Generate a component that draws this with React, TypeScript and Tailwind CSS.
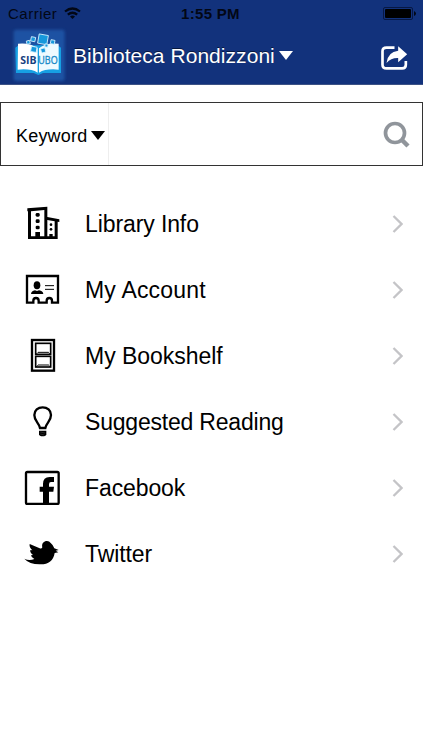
import type { ReactNode } from 'react'

const ICON_BOX = '27 33 108 108'

function BuildingIcon() {
  return (
    <svg viewBox="27 30 108 108" className="h-9 w-9">
      <path d="M37 40L97 35V66L133 73V81L128 80V132H39V49L37 49ZM48 49V124H61V111H75V124H88V45ZM97 75V124H103V117H113V124H119V79Z" fillRule="evenodd" />
      <rect x="62" y="54" width="12" height="11" rx="4" />
      <rect x="62" y="73" width="12" height="11" rx="4" />
      <rect x="62" y="92" width="12" height="11" rx="4" />
      <circle cx="108" cy="89" r="4" />
      <circle cx="108" cy="103" r="4" />
    </svg>
  )
}

function AccountIcon() {
  return (
    <svg viewBox={ICON_BOX} className="h-9 w-9">
      <path d="M36 48H129V128H111V122Q111 114 103 114T95 122V128H71V122Q71 114 63 114T55 122V128H36Z" fill="none" stroke="black" strokeWidth="7" />
      <ellipse cx="66" cy="76" rx="10" ry="12" />
      <path d="M48 102Q49 93 60 91L66 93L72 91Q84 93 85 102Z" />
      <path d="M90 77H117M90 88H117" stroke="black" strokeWidth="3" />
    </svg>
  )
}

function BookshelfIcon() {
  return (
    <svg viewBox={ICON_BOX} className="h-9 w-9" fill="none" stroke="black">
      <rect x="51" y="42" width="66" height="92" strokeWidth="7" />
      <rect x="62" y="52" width="45" height="33" strokeWidth="5" />
      <rect x="62" y="91" width="45" height="32" strokeWidth="5" />
      <path d="M69 79H101M69 117H101" strokeWidth="3" />
      <path d="M64 84L69 79M105 84L100 79M64 122L69 117M105 122L100 117" strokeWidth="2" />
    </svg>
  )
}

function BulbIcon() {
  return (
    <svg viewBox={ICON_BOX} className="h-9 w-9">
      <path d="M75 108C72 92 58 87 58 69C58 55 69 46 83 46S108 55 108 69C108 87 94 92 91 108Z" fill="none" stroke="black" strokeWidth="7" />
      <path d="M72 116H94V127Q93 133 83 133T72 127Z" />
      <path d="M76 120L90 123M76 126L88 129" stroke="#777" strokeWidth="1" />
    </svg>
  )
}

function FacebookIcon() {
  return (
    <svg viewBox={ICON_BOX} className="h-9 w-9">
      <rect x="33" y="42" width="98" height="96" rx="4" fill="none" stroke="black" strokeWidth="7" />
      <path d="M84 138V101H74V86H84V78Q84 57 104 57H117V72H108Q102 72 102 79V86H117L115 101H102V138Z" />
    </svg>
  )
}

function TwitterIcon() {
  return (
    <svg viewBox={ICON_BOX} className="h-9 w-9">
      <path d="M28 104Q43 112 58 105Q49 101 48 94L54 93Q44 86 46 78L52 79Q42 70 44 60L74 73Q80 75 82 70C79 58 87 51 96 51Q103 51 107 57Q113 61 118 73L131 78L122 80L130 85L119 87C115 110 101 121 77 121Q44 122 28 104Z" />
    </svg>
  )
}

const menu: { label: string; icon: ReactNode; tracking: string }[] = [
  { label: 'Library Info', icon: <BuildingIcon />, tracking: 'tracking-[-0.1px]' },
  { label: 'My Account', icon: <AccountIcon />, tracking: 'tracking-[0.2px]' },
  { label: 'My Bookshelf', icon: <BookshelfIcon />, tracking: 'tracking-[-0.03px]' },
  { label: 'Suggested Reading', icon: <BulbIcon />, tracking: 'tracking-[-0.2px]' },
  { label: 'Facebook', icon: <FacebookIcon />, tracking: 'tracking-[-0.1px]' },
  { label: 'Twitter', icon: <TwitterIcon />, tracking: 'tracking-[-0.1px]' },
]

function Logo() {
  return (
    <svg viewBox="18 6 168 168" className="h-14 w-14 shrink-0">
      <defs>
        <filter id="glow" x="-20%" y="-20%" width="140%" height="140%">
          <feGaussianBlur stdDeviation="5" />
        </filter>
      </defs>
      <rect x="26" y="14" width="153" height="154" rx="8" fill="#2461b4" opacity="0.7" filter="url(#glow)" />
      <path d="M31 68L41 61H158L168 68V144H114L100 150L86 144H33Z" fill="#16a0e3" />
      <path d="M39 56Q75 52 98 70V143Q77 130 38 134Z" fill="white" />
      <path d="M102 70Q123 52 161 56V134Q123 130 102 143Z" fill="#eefaff" />
      <g fill="#1698dc" stroke="#d7f3ff" strokeWidth="2.5">
        <rect x="100" y="29" width="28" height="28" transform="rotate(10 114 43)" />
        <rect x="78" y="36" width="13" height="13" transform="rotate(12 84 42)" />
        <rect x="65" y="47" width="10" height="10" transform="rotate(-15 70 52)" />
        <rect x="78" y="65" width="17" height="16" transform="rotate(10 86 73)" />
        <rect x="108" y="70" width="13" height="13" transform="rotate(-15 114 76)" />
        <rect x="120" y="57" width="9" height="9" transform="rotate(12 124 61)" />
        <rect x="137" y="45" width="12" height="12" transform="rotate(12 143 51)" />
      </g>
      <text x="46" y="117" textLength="49" lengthAdjust="spacingAndGlyphs" fill="#17427f" className="font-[Open_Sans,sans-serif] text-[31px] font-bold">SIB</text>
      <text x="100" y="117" textLength="58" lengthAdjust="spacingAndGlyphs" fill="#1689c8" stroke="#1689c8" strokeWidth="1" className="font-[Open_Sans,sans-serif] text-[31px]">UBO</text>
    </svg>
  )
}

function StatusBar() {
  return (
    <div className="grid h-[27px] grid-cols-3 items-center pl-2 pr-[7px] text-[15px] leading-none text-[#020715]">
      <div className="flex items-center gap-[7px]">
        <span className="tracking-[0.5px]">Carrier</span>
        <svg viewBox="0 0 17 13" className="h-[13px] w-[17px]" fill="none" stroke="currentColor" strokeWidth="2.2">
          <path d="M1 4.5Q8.500-1.500 16 4.500M3.800 7.700Q8.500 3.800 13.200 7.700" />
          <path d="M6 9.500Q8.500 7.500 11 9.500L8.500 12Z" fill="currentColor" stroke="none" />
        </svg>
      </div>
      <span className="pr-[3px] text-center font-bold tracking-[0.3px]">1:55 PM</span>
      <svg viewBox="0 0 33 13" className="h-[13px] w-[33px] justify-self-end">
        <rect x="0.500" y="0.500" width="29" height="12" rx="1.500" fill="none" stroke="#071844" />
        <rect x="2" y="2" width="26" height="9" rx="1" fill="black" />
        <path d="M31 4Q33 5 33 6.500T31 9Z" fill="#020715" />
      </svg>
    </div>
  )
}

export default function App() {
  return (
    <div className="h-[750px] w-[423px] overflow-hidden bg-white font-[Liberation_Sans,Arial,sans-serif] text-black">
      <header className="h-[85px] border-b border-[#3c5285] bg-[#12327c]">
        <StatusBar />
        <div className="flex h-14 items-center pl-[11px] pr-[15px] text-white">
          <Logo />
          <h1 className="ml-[6px] whitespace-nowrap text-[21px] leading-none tracking-[0.05px] [text-shadow:0_-1px_0_#07183f]">
            Biblioteca Rondizzoni
          </h1>
          <svg viewBox="0 0 14 9" className="ml-1 h-[9px] w-[14px]" fill="white">
            <path d="M0 0H14L7 9Z" />
          </svg>
          <svg viewBox="244 137 80 72" className="ml-auto mt-[5px] h-6 w-[27px]">
            <path d="M284 142H260Q248 142 248 153V193Q248 204 260 204H307Q318 204 318 193V182" fill="none" stroke="white" strokeWidth="8" />
            <path d="M295 138L322 162L295 186V173Q274 172 260 188Q264 154 295 151Z" fill="white" />
          </svg>
        </div>
      </header>

      <div className="mt-[17px] flex h-16 border border-[#333]">
        <button className="flex w-[108px] items-center gap-1 border-r border-[#eee] pl-[15px] text-[18px] tracking-[0.2px]">
          <span className="mt-1">Keyword</span>
          <svg viewBox="0 0 14 9" className="mt-[2px] h-[9px] w-[14px] shrink-0">
            <path d="M0 0H14L7 9Z" />
          </svg>
        </button>
        <div className="flex flex-1 items-center justify-end pr-3">
          <svg viewBox="0 0 27 27" className="h-[27px] w-[27px]" fill="none" stroke="#90959b">
            <circle cx="12" cy="12" r="9.500" strokeWidth="3.700" />
            <path d="M18.500 18.500L25 25" strokeWidth="4.500" />
          </svg>
        </div>
      </div>

      <nav className="mt-6">
        {menu.map(item => (
          <button key={item.label} className="flex h-[66px] w-full items-center pl-6 pr-5 text-left">
            {item.icon}
            <span className={`ml-[25px] mt-[2px] whitespace-nowrap text-[23px] leading-none ${item.tracking}`}>{item.label}</span>
            <svg viewBox="0 0 11 18" className="ml-auto mt-[2px] h-[18px] w-[11px]" fill="none" stroke="#c4c4c7" strokeWidth="2.300">
              <path d="M1.500 1L9.500 9L1.500 17" />
            </svg>
          </button>
        ))}
      </nav>
    </div>
  )
}
